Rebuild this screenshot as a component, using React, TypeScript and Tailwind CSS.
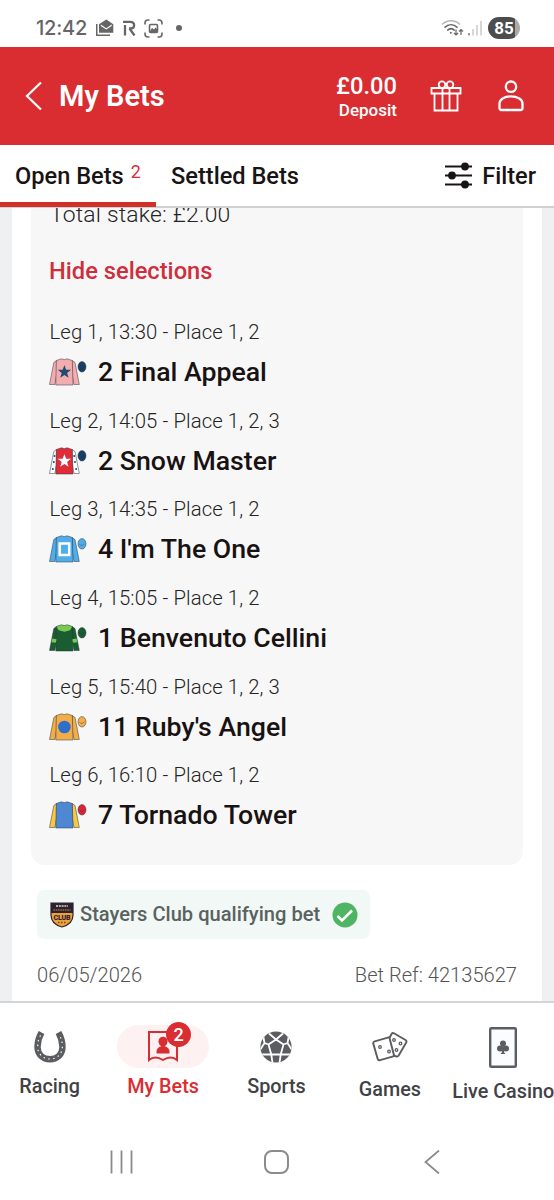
import type { ReactNode } from "react"

type SilkProps = {
  body: string
  sleeve: string
  cap: string
  children?: ReactNode
}

interface Leg {
  title: string
  horse: string
  silk: ReactNode
}

function Silk({ body, sleeve, cap, children }: SilkProps) {
  return (
    <svg viewBox="0 0 38 28" className="w-[38px] h-7 shrink-0" stroke="#2b3440" strokeWidth="0.5">
      <path d="M7.500 2.500 4.800 4.500.5 26.500h5.300L7.800 16zM23 2.500l3 2 4.300 22H25L23 16z" fill={sleeve} />
      <path d="M7.300 2.500 12.500.8q2.800 1.600 5.600 0l5.200 1.700.7 24.500H6.800z" fill={body} />
      <g stroke="none">{children}</g>
      <ellipse cx="33" cy="8.800" rx="4" ry="5.200" fill={cap} />
      <path d="M30.500 9.500q2.500 2.500 5-.500" fill="none" strokeWidth="0.400" />
    </svg>
  )
}

const starPath = "m15.400 7 1.700 4.800h5l-4 3.100 1.500 4.900-4.200-2.900-4.200 2.900 1.500-4.900-4-3.100h5z"

const legs: Leg[] = [
  {
    title: "Leg 1, 13:30 - Place 1, 2",
    horse: "2 Final Appeal",
    silk: (
      <Silk body="#f4adaf" sleeve="#f4adaf" cap="#173e64">
        <path d={starPath} fill="#204b72" />
      </Silk>
    ),
  },
  {
    title: "Leg 2, 14:05 - Place 1, 2, 3",
    horse: "2 Snow Master",
    silk: (
      <Silk body="#e02b38" sleeve="#ffffff" cap="#173e64">
        <path d={starPath} fill="#fff" />
        <g fill="#204b72">
          <circle cx="5.500" cy="9" r="1" />
          <circle cx="4.800" cy="15" r="1" />
          <circle cx="3.800" cy="22" r="1" />
          <circle cx="25.200" cy="9" r="1" />
          <circle cx="26" cy="15" r="1" />
          <circle cx="27.200" cy="22" r="1" />
        </g>
      </Silk>
    ),
  },
  {
    title: "Leg 3, 14:35 - Place 1, 2",
    horse: "4 I'm The One",
    silk: (
      <Silk body="#50adea" sleeve="#50adea" cap="#50adea">
        <rect x="10.700" y="8.500" width="9.500" height="11.500" fill="none" stroke="#fff" strokeWidth="2.500" />
      </Silk>
    ),
  },
  {
    title: "Leg 4, 15:05 - Place 1, 2",
    horse: "1 Benvenuto Cellini",
    silk: (
      <Silk body="#195d31" sleeve="#195d31" cap="#195d31">
        <path d="M7.500 2.700 12.500 1q2.800 1.600 5.600 0l5 1.700-2 3.500-5.700 1.500-5.700-1.500z" fill="#7bc950" />
        <path d="m3.300 14.500 4.300.7-.8 3.500-4.200-.500zM23.300 15.200l4.300-.7.600 3.700-4.200.500z" fill="#7bc950" />
      </Silk>
    ),
  },
  {
    title: "Leg 5, 15:40 - Place 1, 2, 3",
    horse: "11 Ruby's Angel",
    silk: (
      <Silk body="#f2ad48" sleeve="#f2ad48" cap="#f2ad48">
        <circle cx="15.400" cy="14" r="6.300" fill="#2d6fca" />
      </Silk>
    ),
  },
  {
    title: "Leg 6, 16:10 - Place 1, 2",
    horse: "7 Tornado Tower",
    silk: <Silk body="#4e88d2" sleeve="#f8c843" cap="#dc2638" />,
  },
]

function StatusBar() {
  return (
    <div className="h-[47px] shrink-0 flex items-center pt-[9px] pl-9 pr-[34px] text-[#666]">
      <span className="font-['Inter'] text-[20px] font-medium leading-none w-[60px] whitespace-nowrap tracking-[-0.200px]">12:42</span>
      <svg viewBox="0 0 18 18" className="w-[18px] h-[18px]" fill="currentColor">
        <path d="M0 5h1.500v10.500H14V17H0z" />
        <path d="M3 5.200 10.300.500l7 4.700v8.600H3z" />
        <path d="m4.800 5.600 5.500 3.600 5.400-3.600v1.500l-5.400 3.500-5.500-3.500z" fill="#fff" />
      </svg>
      <svg viewBox="0 0 13 16" className="w-[13px] h-4 ml-[9px]" fill="none" stroke="currentColor" strokeWidth="2.300">
        <path d="M0 1.800h7c5.500 0 5.500 6.700 0 6.700H6M2 5v10.500M6.500 8.500l5 7" />
      </svg>
      <svg viewBox="0 0 19 19" className="w-[19px] h-[19px] ml-2" fill="none" stroke="currentColor" strokeWidth="1.600">
        <path d="M1 5.500V4a3 3 0 0 1 3-3h1.500M13.500 1H15a3 3 0 0 1 3 3v1.500M18 13.500V15a3 3 0 0 1-3 3h-1.500M5.500 18H4a3 3 0 0 1-3-3v-1.500" />
        <rect x="5.500" y="5.500" width="8" height="8" rx="1.200" />
        <path d="m6 12 2-3 2 1.500 1.500-2 2 2V13H6z" fill="currentColor" stroke="none" />
      </svg>
      <span className="size-1.5 rounded-full bg-[#666] ml-[13px]" />
      <svg viewBox="0 0 23 18" className="w-[23px] h-[18px] ml-auto" fill="none" stroke="currentColor" strokeWidth="1.600">
        <path d="M1 5.500c5-5 13-5 18 0" stroke="#b5b5b5" />
        <path d="M3.500 8.600c4-3.800 9-3.800 13 0M6.200 11.500c2.500-2.300 5.200-2.300 7.500 0" />
        <circle cx="9.800" cy="13.800" r="1" fill="currentColor" stroke="none" />
        <path d="M15 10.500V16m-2-2 2 2 2-2M20 16v-5.500m-2 2 2-2 2 2" strokeWidth="1.200" />
      </svg>
      <svg viewBox="0 0 14 16" className="w-3.5 h-4 ml-1 mr-[6px]" strokeWidth="1.300" stroke="#c2c2c2">
        <path d="M1 13v2.500" stroke="#666" />
        <path d="M5 9v6.500M9 5v10.500M13 1v14.500" />
      </svg>
      <span className="w-8 h-[22px] rounded-full bg-[linear-gradient(90deg,#4d4d4d_84%,#aaa_84%)] text-white text-[17px] leading-[22px] font-bold text-center">
        85
      </span>
    </div>
  )
}

function Header() {
  return (
    <header className="h-[98px] shrink-0 bg-[#d92d32] text-white flex items-center pl-[25px] pr-[30px]">
      <svg viewBox="0 0 17 30" className="w-[17px] h-[30px]" fill="none" stroke="currentColor" strokeWidth="2.200">
        <path d="M16 1.500 2 15l14 13.500" />
      </svg>
      <h1 className="ml-[17px] text-[29px] leading-none font-semibold">My Bets</h1>
      <div className="ml-auto text-right pt-[3px]">
        <div className="text-[23.700px] leading-[25px] font-medium">£0.00</div>
        <div className="text-[17px] leading-[23px] font-medium">Deposit</div>
      </div>
      <svg viewBox="0 0 32 32" className="w-8 h-8 ml-[33px]" fill="none" stroke="currentColor" strokeWidth="1.800">
        <path d="M1.500 8h29v5.500h-29zM4.500 13.500h23v17h-23zM12.500 8v22M19.500 8v22" />
        <circle cx="12" cy="4.700" r="3.300" />
        <circle cx="20" cy="4.700" r="3.300" />
      </svg>
      <svg viewBox="0 0 26 32" className="w-[26px] h-8 ml-9" fill="none" stroke="currentColor" strokeWidth="2.300">
        <circle cx="13" cy="6.700" r="5.200" />
        <path d="M1.500 28v-4.500C1.500 14 24.500 14 24.500 23.500V28q0 2-2 2h-19q-2 0-2-2z" />
      </svg>
    </header>
  )
}

function Tabs() {
  return (
    <div className="h-[63px] shrink-0 flex border-b-2 border-[#cfd0d1] text-[23.600px] leading-[62px] font-medium text-[#191414]">
      <div className="w-[156px] h-[62px] pl-[15px] border-b-[5px] border-[#d03025] whitespace-nowrap">
        Open Bets
        <sup className="text-[18px] leading-none text-[#d92d3f] font-normal ml-[7px] -top-[6px]">2</sup>
      </div>
      <div className="ml-[15px]">Settled Bets</div>
      <div className="ml-auto mr-[18px] flex items-center gap-2.5">
        <svg viewBox="0 0 27 27" className="w-[27px] h-[27px]" stroke="currentColor" strokeWidth="2.200" fill="currentColor">
          <path d="M0 4.500h27M0 13.500h27M0 22.500h27" />
          <circle cx="20" cy="4.500" r="2.800" />
          <circle cx="7" cy="13.500" r="2.800" />
          <circle cx="20" cy="22.500" r="2.800" />
        </svg>
        Filter
      </div>
    </div>
  )
}

function ClubBadge() {
  return (
    <svg viewBox="0 0 24 26" className="w-6 h-[26px]">
      <path d="M1 1h22v12q0 9-11 12Q1 22 1 13z" fill="#eda03b" stroke="#2d2230" strokeWidth="1.200" />
      <path d="M1 1h22v10H1z" fill="#2d2230" />
      <path d="M6 4h12" stroke="#ddd" strokeWidth="1.600" strokeDasharray="2 .8" />
      <path d="M3.500 8h17" stroke="#87593c" strokeWidth="1.800" strokeDasharray="1.500 .8" />
      <text x="12" y="17.800" textAnchor="middle" fontSize="7" fontWeight="900" fill="#2d2230" textLength="17">
        CLUB
      </text>
      <path d="M8 20.500h8" stroke="#704522" strokeWidth="1.400" strokeDasharray="1.500 1.500" />
    </svg>
  )
}

function BetCard() {
  return (
    <main className="h-[793px] shrink-0 overflow-hidden bg-[#eff0f1] px-3">
      <div className="h-full bg-white px-[19px] flex flex-col">
        <section className="h-[657px] shrink-0 rounded-b-[14px] bg-[#f7f7f7] px-[18px] text-[#242424]">
          <p className="text-[22.900px] leading-6 font-light -mt-[5px] ml-px tracking-[0.200px]">Total stake: £2.00</p>
          <p className="mt-[30px] text-[23.700px] leading-7 font-medium text-[#cf2e3c]">Hide selections</p>
          <div className="mt-[33px]">
            {legs.map((leg) => (
              <div key={leg.title} className="h-[88.700px]">
                <p className="ml-[0.500px] text-[20.300px] leading-7 font-light tracking-[0.100px]">{leg.title}</p>
                <div className="mt-2 h-9 flex items-center gap-[11px]">
                  {leg.silk}
                  <span className="text-[26.700px] leading-9 font-medium text-[#191212] whitespace-nowrap">{leg.horse}</span>
                </div>
              </div>
            ))}
          </div>
        </section>
        <div className="mt-[25px] ml-1.5 w-[333px] h-[49px] shrink-0 rounded-[7px] bg-[#f1f8f5] flex items-center pl-[13px] pr-3 whitespace-nowrap">
          <ClubBadge />
          <span className="ml-[6px] text-[20.100px] font-medium text-[#5a6260]">Stayers Club qualifying bet</span>
          <svg viewBox="0 0 26 26" className="w-[26px] h-[26px] ml-auto">
            <circle cx="13" cy="13" r="12.500" fill="#50b465" />
            <path d="m5.500 14 4.500 4.500L20 8.500" stroke="#fff" strokeWidth="2.500" fill="none" />
          </svg>
        </div>
        <div className="mt-[22px] mx-1.5 flex justify-between text-[20.100px] leading-7 font-light text-[#555]">
          <span>06/05/2026</span>
          <span>Bet Ref: 42135627</span>
        </div>
      </div>
    </main>
  )
}

function Horseshoe() {
  return (
    <svg viewBox="0 0 32 32" className="w-8 h-8" fill="none">
      <path d="M7.500 1.500 C5 6 3.500 10 3.500 16 C3.500 23.500 9 28.300 16 28.300 S28.500 23.500 28.500 16 C28.500 10 27 6 24.500 1.500" stroke="#5b5d60" strokeWidth="6.400" />
      <path d="M6.500 4.500 C4.500 8 3.700 11 3.700 16 C3.700 23 9 28 16 28 S28.300 23 28.300 16 C28.300 11 27.500 8 25.500 4.500" stroke="#fff" strokeWidth="1.200" strokeDasharray="1.400 3.500" />
    </svg>
  )
}

function BetSlip() {
  return (
    <div className="w-[92px] h-[43px] -mt-[2px] rounded-full bg-[#fdf1f2] relative flex items-center justify-center">
      <svg viewBox="0 0 32 32" className="w-8 h-8" fill="none" stroke="#d92d32" strokeWidth="2">
        <path d="M2 2h28v28q-3-2.500-6.500-2.500Q20 27.500 16 30q-4-2.500-7.500-2.500Q5 27.500 2 30z" />
        <path d="M9.500 23.500v-2q0-4 5-5.300-3-1.200-3-4.900a4.500 4.500 0 0 1 9 0q0 3.700-3 4.900 5 1.300 5 5.300v2z" fill="#d92d32" stroke="none" />
      </svg>
      <span className="absolute left-[49px] -top-[3px] size-[25px] rounded-full bg-[#d92d32] text-white text-[18px] leading-[25px] font-medium text-center">
        2
      </span>
    </div>
  )
}

function Football() {
  return (
    <svg viewBox="0 0 32 32" className="w-8 h-8">
      <defs>
        <clipPath id="ball">
          <circle cx="16" cy="16" r="15.600" />
        </clipPath>
      </defs>
      <g clipPath="url(#ball)">
        <path d="M0 0h32v32H0z" fill="#5b5d60" />
        <path
          d="m16 8.500 7.500 5-2.800 10h-9.400l-2.800-10zM16 8.500 9 2.500M16 8.500l7-6M23.500 13.500l4-1.500M27.500 12 29 4M27.500 12l4.500 7M8.500 13.500 4.500 12M4.500 12 3 4M4.500 12 0 19M20.700 23.500 19.500 32M20.700 23.500H31M11.300 23.500l1.200 8.500M11.300 23.500H1"
          fill="none"
          stroke="#fff"
          strokeWidth="1.800"
        />
      </g>
    </svg>
  )
}

function Dice() {
  return (
    <svg viewBox="0 0 36 30" className="w-9 h-[30px]" fill="none" stroke="#5b5d60" strokeWidth="1.900">
      <rect x="3.200" y="7" width="18.500" height="19.500" rx="2" transform="rotate(-16 12.500 17)" />
      <path d="m17.500 6 2-4q1-1.500 2.500-.7L33.500 8q1.500 1 .7 2.500l-7.500 13q-1 1.500-2.700.8l-2-1z" fill="#fff" />
      <g strokeWidth="1.300">
        <circle cx="8" cy="15" r="1.300" />
        <circle cx="17" cy="19.500" r="1.300" />
        <circle cx="22" cy="8" r="1.300" />
        <circle cx="28.500" cy="11.500" r="1.300" />
        <circle cx="24.500" cy="18" r="1.300" />
      </g>
    </svg>
  )
}

function PlayingCard() {
  return (
    <svg viewBox="0 0 28 41" className="w-7 h-[41px]">
      <rect x="1.200" y="1.200" width="25.600" height="38.600" rx="1" fill="#fafcff" stroke="#5b5d60" strokeWidth="2.400" />
      <g fill="#5b5d60">
        <circle cx="14" cy="16.500" r="3" />
        <circle cx="11" cy="21.500" r="3" />
        <circle cx="17" cy="21.500" r="3" />
        <path d="M13.200 19h1.600l.4 6.500 1.300 1.500h-5l1.300-1.500z" />
      </g>
    </svg>
  )
}

const navItems = [
  { label: "Racing", icon: <Horseshoe />, labelTop: "mt-[3px]" },
  { label: "My Bets", icon: <BetSlip />, labelTop: "mt-[3px]", active: true },
  { label: "Sports", icon: <Football />, labelTop: "mt-[3px]" },
  { label: "Games", icon: <Dice />, labelTop: "mt-[6px]" },
  { label: "Live Casino", icon: <PlayingCard />, labelTop: "mt-[8px]" },
]

function BottomNav() {
  return (
    <nav className="h-[121px] shrink-0 border-t-2 border-[#d3d6d9] overflow-hidden">
      <div className="flex w-[567px] -ml-[7px]">
        {navItems.map((item) => (
          <div key={item.label} className="w-[113.400px] shrink-0 flex flex-col items-center pt-[19px]">
            <div className="h-[50px] flex items-center justify-center">{item.icon}</div>
            <span
              className={`${item.labelTop} text-[19.800px] leading-6 font-medium whitespace-nowrap ${
                item.active ? "text-[#d92d32]" : "text-[#414246]"
              }`}
            >
              {item.label}
            </span>
          </div>
        ))}
      </div>
    </nav>
  )
}

function SystemBar() {
  return (
    <div className="h-[76px] flex pl-[109px] pt-7">
      <svg viewBox="0 0 24 24" className="w-6 h-6" stroke="#8b8b8b" strokeWidth="1.800">
        <path d="M2.500 .5v23M12.500 .5v23M22.500 .5v23" />
      </svg>
      <div className="w-[25px] h-6 ml-[131px] rounded-[8px] border-2 border-[#8b8b8b]" />
      <svg viewBox="0 0 16 24" className="w-4 h-6 ml-[135px]" fill="none" stroke="#8b8b8b" strokeWidth="1.800">
        <path d="M15 .5 1.500 12 15 23.500" />
      </svg>
    </div>
  )
}

export default function App() {
  return (
    <div className="w-[554px] h-[1200px] bg-white overflow-hidden flex flex-col font-['Roboto',sans-serif]">
      <StatusBar />
      <Header />
      <Tabs />
      <BetCard />
      <BottomNav />
      <SystemBar />
    </div>
  )
}
